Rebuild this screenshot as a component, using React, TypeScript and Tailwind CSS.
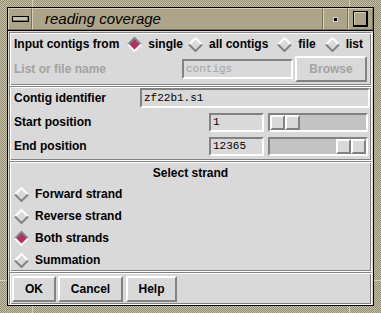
import React from "react";

const sans = "font-['Liberation_Sans',Arial,sans-serif]";
const mono = "font-['Liberation_Mono','Courier_New',monospace]";

const raised = "border-2 border-t-white border-l-white border-r-[#828282] border-b-[#828282]";
const sunken = "border-2 border-t-[#828282] border-l-[#828282] border-r-white border-b-white";
const section = "border border-t-[#828282] border-l-[#828282] border-r-white border-b-white shadow-[inset_1px_1px_0_#fff,inset_-1px_-1px_0_#828282]";
const khakiUp = "border border-t-[#d6d0b4] border-l-[#d6d0b4] border-r-[#7a745d] border-b-[#7a745d]";

const Diamond = ({ on }: { on?: boolean }) => (
  <svg width="15" height="15" viewBox="0 0 15 15" className="shrink-0">
    <polygon points="7.5,1 14,7.5 7.5,14 1,7.5" fill={on ? "#b03060" : "#d9d9d9"} />
    <polyline points="1,7.5 7.5,1 14,7.5" fill="none" stroke={on ? "#828282" : "#ffffff"} strokeWidth="2" />
    <polyline points="1,7.5 7.5,14 14,7.5" fill="none" stroke={on ? "#ffffff" : "#828282"} strokeWidth="2" />
  </svg>
);

const Radio = ({ label, on, className = "" }: { label: string; on?: boolean; className?: string }) => (
  <div className={`flex items-center ${className}`}>
    <Diamond on={on} />
    <span className="ml-[6px]">{label}</span>
  </div>
);

const Slider = () => (
  <div className="flex h-full">
    <div className={`${raised} w-[15px] h-full bg-[#d9d9d9]`} />
    <div className={`${raised} w-[15px] h-full bg-[#d9d9d9]`} />
  </div>
);

const Scroll = ({ end }: { end?: boolean }) => (
  <div className={`${sunken} w-[100px] h-[19px] bg-[#c3c3c3] flex ${end ? "justify-end" : "justify-start"}`}>
    <Slider />
  </div>
);

const Field = ({ value, w, h = "h-[19px]", dim }: { value: string; w: string; h?: string; dim?: boolean }) => (
  <div className={`${sunken} ${w} ${h} flex items-center pl-[2px] ${mono} font-normal text-[11px] ${dim ? "text-[#a3a3a3]" : "text-black"}`}>
    {value}
  </div>
);

export default function App() {
  return (
    <div className={`relative w-[381px] h-[313px] p-[7px] bg-[repeating-conic-gradient(#c6bfa2_0_25%,#948e74_0_50%)] bg-[length:2px_2px] ${sans}`}>
      {/* resize corner marks on the frame */}
      <div className="absolute left-[32px] top-0 w-[1px] h-[7px] bg-[#d6d0b4]" />
      <div className="absolute left-[349px] top-0 w-[1px] h-[7px] bg-[#d6d0b4]" />
      <div className="absolute left-[32px] bottom-0 w-[1px] h-[7px] bg-[#d6d0b4]" />
      <div className="absolute left-[349px] bottom-0 w-[1px] h-[7px] bg-[#d6d0b4]" />
      <div className="absolute left-0 top-[280px] w-[7px] h-[1px] bg-[#d6d0b4]" />
      <div className="absolute right-0 top-[280px] w-[7px] h-[1px] bg-[#d6d0b4]" />

      <div className="relative w-full h-full border border-black flex flex-col bg-black">
        {/* title bar */}
        <div className="h-[22px] flex bg-[#aca589] shrink-0">
          <div className={`${khakiUp} w-[24px] h-full flex items-center justify-center`}>
            <div className="w-[17px] h-[6px] border border-black bg-[#c9c3a6] shadow-[inset_-1px_-1px_0_#7a745d]" />
          </div>
          <div className={`${khakiUp} flex-1 h-full flex items-center pl-[12px] italic text-[15px] text-black`}>
            reading coverage
          </div>
          <div className={`${khakiUp} w-[25px] h-full flex items-center justify-center`}>
            <div className="w-[5px] h-[5px] bg-black border border-[#d6d0b4]" />
          </div>
          <div className={`${khakiUp} w-[25px] h-full flex items-center justify-center`}>
            <div className="w-[15px] h-[16px] border border-black border-r-2 border-b-2 shadow-[inset_1px_1px_0_#d6d0b4]" />
          </div>
        </div>

        {/* dialog body */}
        <div className="mt-[1px] flex-1 bg-[#d9d9d9] pt-[1px] px-[1px] flex flex-col text-[12px] font-bold text-black">
          <div className={`${section} h-[54px] flex flex-col px-[4px]`}>
            <div className="h-[22px] flex items-center">
              <span>Input contigs from</span>
              <Radio label="single" on className="ml-[8px]" />
              <Radio label="all contigs" className="ml-[5px]" />
              <Radio label="file" className="ml-[9px]" />
              <Radio label="list" className="ml-[9px]" />
            </div>
            <div className="h-[28px] flex items-center">
              <span className="flex-1 text-[#a3a3a3]">List or file name</span>
              <Field value="contigs" w="w-[111px]" h="h-[20px]" dim />
              <div className={`${raised} ml-[2px] w-[72px] h-[26px] flex items-center justify-center text-[#a3a3a3]`}>
                Browse
              </div>
            </div>
          </div>

          <div className={`${section} h-[75px] flex flex-col gap-[2px] px-[4px] pr-[1px]`}>
            <div className="h-[22px] flex items-center">
              <span className="w-[126px]">Contig identifier</span>
              <Field value="zf22b1.s1" w="flex-1" h="h-[20px]" />
            </div>
            <div className="h-[22px] flex items-center">
              <span className="flex-1">Start position</span>
              <Field value="1" w="w-[55px]" />
              <div className="ml-[4px] mr-[2px]"><Scroll /></div>
            </div>
            <div className="h-[22px] flex items-center">
              <span className="flex-1">End position</span>
              <Field value="12365" w="w-[55px]" />
              <div className="ml-[4px] mr-[2px]"><Scroll end /></div>
            </div>
          </div>

          <div className={`${section} h-[111px] flex flex-col px-[4px]`}>
            <div className="h-[21px] flex items-center justify-center">Select strand</div>
            <Radio label="Forward strand" className="h-[22px]" />
            <Radio label="Reverse strand" className="h-[22px]" />
            <Radio label="Both strands" on className="h-[22px]" />
            <Radio label="Summation" className="h-[22px]" />
          </div>

          <div className={`${section} h-[33px] flex items-start gap-[2px] pt-[3px] px-[2px]`}>
            <div className={`${raised} w-[44px] h-[26px] flex items-center justify-center`}>OK</div>
            <div className={`${raised} w-[65px] h-[26px] flex items-center justify-center`}>Cancel</div>
            <div className={`${raised} ml-[1px] w-[51px] h-[26px] flex items-center justify-center`}>Help</div>
          </div>
        </div>
        <div className="h-[1px] bg-black shrink-0" />
      </div>
    </div>
  );
}
